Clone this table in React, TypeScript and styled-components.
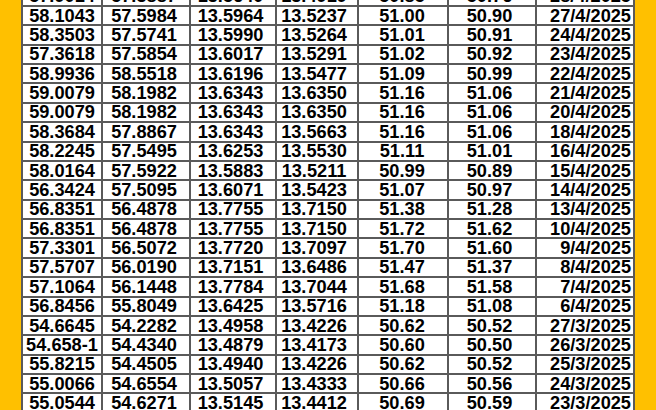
import styled, { createGlobalStyle } from "styled-components";

const GlobalStyle = createGlobalStyle`
  html, body {
    margin: 0;
    padding: 0;
    background: #ffc000;
  }
`;

type Align = "center" | "right";

const columns: { width: number; align: Align; pad: number }[] = [
  { width: 78, align: "center", pad: 0 },
  { width: 86, align: "center", pad: 4 },
  { width: 84, align: "center", pad: 5 },
  { width: 80, align: "center", pad: 6 },
  { width: 88, align: "center", pad: 2 },
  { width: 86, align: "center", pad: 5 },
  { width: 96, align: "right", pad: 2 },
];

const rows: string[][] = [
  ["57.9014", "57.3887", "13.5640", "13.4919", "50.85", "50.76", "28/4/2025"],
  ["58.1043", "57.5984", "13.5964", "13.5237", "51.00", "50.90", "27/4/2025"],
  ["58.3503", "57.5741", "13.5990", "13.5264", "51.01", "50.91", "24/4/2025"],
  ["57.3618", "57.5854", "13.6017", "13.5291", "51.02", "50.92", "23/4/2025"],
  ["58.9936", "58.5518", "13.6196", "13.5477", "51.09", "50.99", "22/4/2025"],
  ["59.0079", "58.1982", "13.6343", "13.6350", "51.16", "51.06", "21/4/2025"],
  ["59.0079", "58.1982", "13.6343", "13.6350", "51.16", "51.06", "20/4/2025"],
  ["58.3684", "57.8867", "13.6343", "13.5663", "51.16", "51.06", "18/4/2025"],
  ["58.2245", "57.5495", "13.6253", "13.5530", "51.11", "51.01", "16/4/2025"],
  ["58.0164", "57.5922", "13.5883", "13.5211", "50.99", "50.89", "15/4/2025"],
  ["56.3424", "57.5095", "13.6071", "13.5423", "51.07", "50.97", "14/4/2025"],
  ["56.8351", "56.4878", "13.7755", "13.7150", "51.38", "51.28", "13/4/2025"],
  ["56.8351", "56.4878", "13.7755", "13.7150", "51.72", "51.62", "10/4/2025"],
  ["57.3301", "56.5072", "13.7720", "13.7097", "51.70", "51.60", "9/4/2025"],
  ["57.5707", "56.0190", "13.7151", "13.6486", "51.47", "51.37", "8/4/2025"],
  ["57.1064", "56.1448", "13.7784", "13.7044", "51.68", "51.58", "7/4/2025"],
  ["56.8456", "55.8049", "13.6425", "13.5716", "51.18", "51.08", "6/4/2025"],
  ["54.6645", "54.2282", "13.4958", "13.4226", "50.62", "50.52", "27/3/2025"],
  ["54.658-1", "54.4340", "13.4879", "13.4173", "50.60", "50.50", "26/3/2025"],
  ["55.8215", "54.4505", "13.4940", "13.4226", "50.62", "50.52", "25/3/2025"],
  ["55.0066", "54.6554", "13.5057", "13.4333", "50.66", "50.56", "24/3/2025"],
  ["55.0544", "54.6271", "13.5145", "13.4412", "50.69", "50.59", "23/3/2025"],
];

const Page = styled.div`
  height: 410px;
  overflow: hidden;
  padding: 0 21px;
  background: #ffc000;
`;

const Sheet = styled.div`
  display: grid;
  grid-template-columns: ${columns.map((c) => `${c.width}px`).join(" ")};
  grid-auto-rows: 17.375px;
  gap: 2px;
  padding: 2px;
  margin-top: -14.4px;
  background: #5a5a5a;
  font-family: "Liberation Sans", Arial, sans-serif;
  font-weight: 700;
  font-size: 18.2px;
  line-height: 1;
  color: #000;
`;

const Cell = styled.div<{ $align: Align; $pad: number }>`
  display: flex;
  align-items: center;
  justify-content: ${(p) => (p.$align === "right" ? "flex-end" : "center")};
  padding-right: ${(p) => p.$pad}px;
  background: #fff;
  white-space: nowrap;
  overflow: visible;
`;

export default function App() {
  return (
    <>
      <GlobalStyle />
      <Page>
        <Sheet>
          {rows.map((row, r) =>
            row.map((value, c) => (
              <Cell key={`${r}-${c}`} $align={columns[c].align} $pad={columns[c].pad}>
                {value}
              </Cell>
            ))
          )}
        </Sheet>
      </Page>
    </>
  );
}
